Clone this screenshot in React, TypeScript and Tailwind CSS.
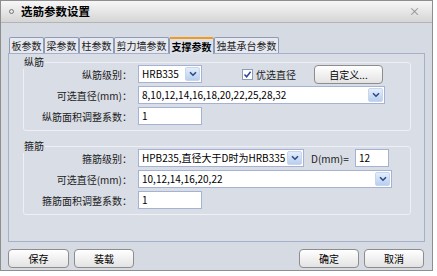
import React from 'react';

const font = { fontFamily: '"Noto Sans CJK SC", "Liberation Sans", sans-serif' };

const Arrow = () => (
  <div className="w-[15px] h-[14px] mr-[1px] shrink-0 flex items-center justify-center rounded-[2px] bg-gradient-to-b from-[#e4eefb] to-[#b9cfee] border border-[#c6d6ee]">
    <svg width="8" height="6" viewBox="0 0 8 6">
      <path d="M1 1.2 L4 4.2 L7 1.2" fill="none" stroke="#2c4a86" strokeWidth="1.6" />
    </svg>
  </div>
);

const Select: React.FC<{ value: string; w: string }> = ({ value, w }) => (
  <div className={`${w} h-[18px] bg-white border border-[#a5b2d3] flex items-center justify-between pl-[3px] text-[10px] text-black leading-[14px]`}>
    <span className="whitespace-nowrap">{value}</span>
    <Arrow />
  </div>
);

const Input: React.FC<{ value: string; w: string }> = ({ value, w }) => (
  <div className={`${w} h-[18px] bg-white border border-[#a5b2d3] flex items-center pl-[3px] text-[10px] text-black leading-[14px]`}>
    {value}
  </div>
);

const Btn: React.FC<{ label: string; w: string }> = ({ label, w }) => (
  <div className={`${w} h-[19px] rounded-[4px] border border-[#8d8d8d] bg-gradient-to-b from-[#ffffff] to-[#e3e3e3] flex items-center justify-center text-[10px] text-black`}>
    {label}
  </div>
);

const Label: React.FC<{ text: string }> = ({ text }) => (
  <div className="w-[114px] pr-[6px] text-right text-[10px] text-[#222] whitespace-nowrap">{text}</div>
);

const tabs = ['板参数', '梁参数', '柱参数', '剪力墙参数', '支撑参数', '独基承台参数'];

export default function App() {
  return (
    <div className="w-[437px] h-[276px] bg-white" style={font}>
      <div className="w-[433px] h-[271px] border border-[#8e8e8e] bg-[#d6dae3] flex flex-col">
        <div className="h-[22px] shrink-0 bg-gradient-to-b from-[#f7f7f7] to-[#d5d5d5] border-b border-[#b4b4b4] flex items-center px-[8px]">
          <span className="w-[5px] h-[5px] rounded-full border border-[#777] mr-[7px]" />
          <span className="text-[11.5px] font-bold text-black">选筋参数设置</span>
          <span className="ml-auto mr-[4px] text-[11px] text-[#888]">×</span>
        </div>
        <div className="px-[7px] pt-[13px] flex flex-col">
          <div className="flex items-end h-[17px] pl-[1px]">
            {tabs.map((t, i) => {
              const active = i === 4;
              return (
                <div
                  key={t}
                  className={
                    active
                      ? 'h-[17px] px-[1.5px] border border-b-0 border-[#8f9ab5] border-t-2 border-t-[#f29a1c] bg-[#dde1ea] text-[10px] font-bold text-black flex items-center -mb-[1px] relative z-10 rounded-t-[2px]'
                      : 'h-[16px] px-[1.5px] border border-b-0 border-[#8f9ab5] bg-[#e6e9f0] text-[10px] text-[#222] flex items-center rounded-t-[2px]'
                  }
                >
                  {t}
                </div>
              );
            })}
          </div>
          <div className="h-[189px] border border-[#a6b0c8] bg-[#d9dde6] pl-[14px] pr-[13px] pt-[1px] flex flex-col gap-[8px]">
            <fieldset className="border border-[#eef0f5] rounded-[3px] px-0 pb-[5px] pt-0">
              <legend className="ml-[-1px] px-[1px] text-[10px] text-[#222] leading-[14px]">纵筋</legend>
              <div className="flex flex-col gap-[3px] mt-[-4px]">
                <div className="flex items-center h-[18px]">
                  <Label text="纵筋级别：" />
                  <Select value="HRB335" w="w-[64px]" />
                  <div className="ml-[40px] flex items-center gap-[3px]">
                    <div className="w-[11px] h-[11px] border border-[#8f9ab5] bg-white flex items-center justify-center">
                      <svg width="9" height="9" viewBox="0 0 9 9">
                        <path d="M1.5 4.5 L3.6 6.8 L7.6 1.8" fill="none" stroke="#2a47a0" strokeWidth="1.5" />
                      </svg>
                    </div>
                    <span className="text-[10px] text-[#222]">优选直径</span>
                  </div>
                  <div className="ml-[18px]">
                    <Btn label="自定义..." w="w-[69px]" />
                  </div>
                </div>
                <div className="flex items-center h-[18px]">
                  <Label text="可选直径(mm)：" />
                  <Select value="8,10,12,14,16,18,20,22,25,28,32" w="w-[247px]" />
                </div>
                <div className="flex items-center h-[18px]">
                  <Label text="纵筋面积调整系数：" />
                  <Input value="1" w="w-[64px]" />
                </div>
              </div>
            </fieldset>
            <fieldset className="border border-[#eef0f5] rounded-[3px] px-0 pb-[5px] pt-0">
              <legend className="ml-[-1px] px-[1px] text-[10px] text-[#222] leading-[14px]">箍筋</legend>
              <div className="flex flex-col gap-[3px] mt-[-4px]">
                <div className="flex items-center h-[18px]">
                  <Label text="箍筋级别：" />
                  <Select value="HPB235,直径大于D时为HRB335" w="w-[166px]" />
                  <span className="ml-[7px] text-[10px] text-[#222]">D(mm)=</span>
                  <div className="ml-auto mr-[21px]">
                    <Input value="12" w="w-[34px]" />
                  </div>
                </div>
                <div className="flex items-center h-[18px]">
                  <Label text="可选直径(mm)：" />
                  <Select value="10,12,14,16,20,22" w="w-[254px]" />
                </div>
                <div className="flex items-center h-[18px]">
                  <Label text="箍筋面积调整系数：" />
                  <Input value="1" w="w-[64px]" />
                </div>
              </div>
            </fieldset>
          </div>
        </div>
        <div className="px-[7px] pt-[7px] flex items-center">
          <Btn label="保存" w="w-[61px]" />
          <div className="ml-[5px]">
            <Btn label="装载" w="w-[60px]" />
          </div>
          <div className="ml-auto flex gap-[5px] mr-[1px]">
            <Btn label="确定" w="w-[60px]" />
            <Btn label="取消" w="w-[60px]" />
          </div>
        </div>
      </div>
    </div>
  );
}
